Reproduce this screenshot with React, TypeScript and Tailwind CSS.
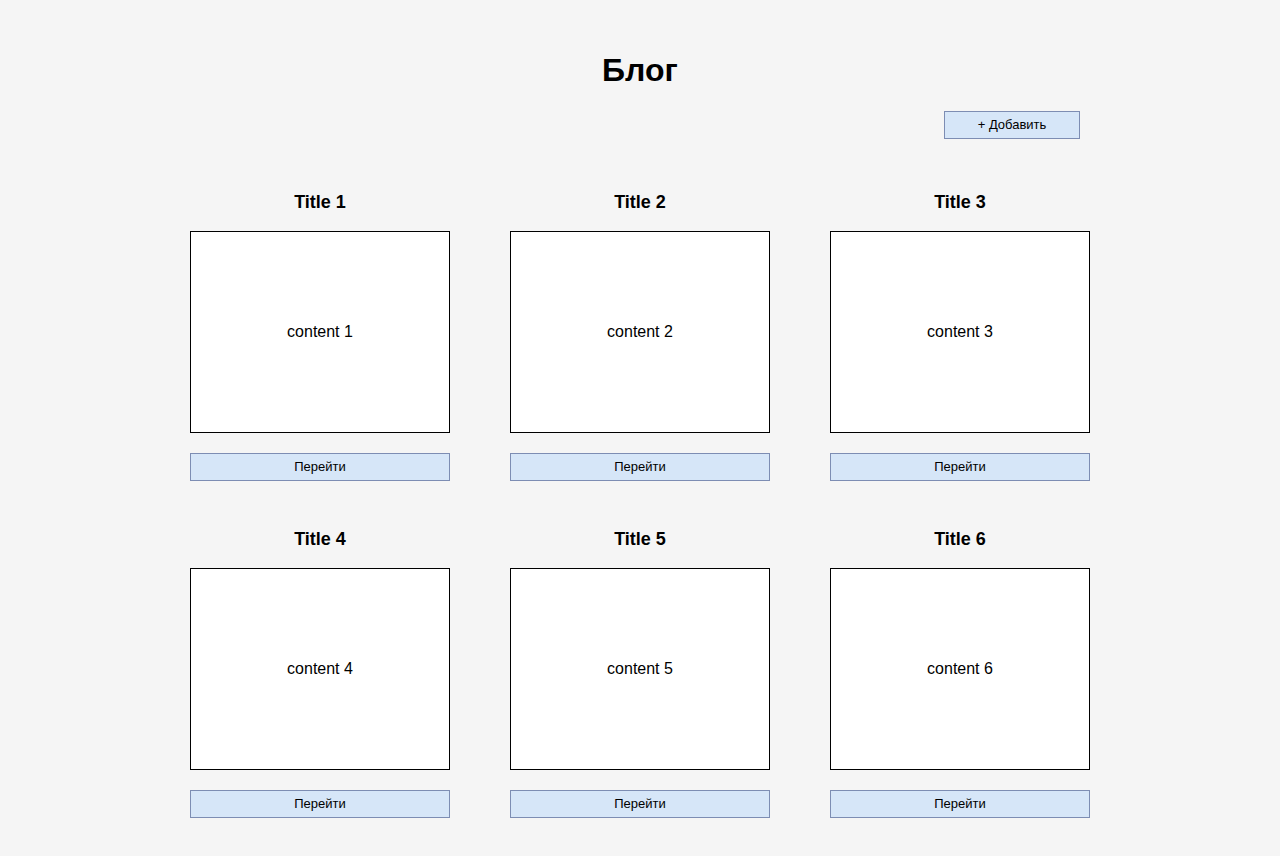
const posts = [1, 2, 3, 4, 5, 6].map((n) => ({
  id: n,
  title: `Title ${n}`,
  content: `content ${n}`,
}))

function PostCard({ title, content }: { title: string; content: string }) {
  return (
    <div className="flex flex-col">
      <h3 className="text-center text-[18px] font-bold leading-[24px] text-black">{title}</h3>
      <div className="mt-[17px] flex h-[202px] items-center justify-center border border-black bg-white text-[16px] text-black">
        {content}
      </div>
      <button className="mt-5 h-7 w-full border border-[#7d8db3] bg-[#d6e6f8] text-[13px] text-black">
        Перейти
      </button>
    </div>
  )
}

export default function App() {
  return (
    <div
      className="min-h-screen bg-[#f5f5f5] pt-[52px] pb-[38px]"
      style={{ fontFamily: '"Liberation Sans", Arial, sans-serif' }}
    >
      <div className="mx-auto w-[900px]">
        <h1 className="text-center text-[32px] font-bold leading-[37px] text-black">Блог</h1>
        <div className="mt-[22px] flex justify-end pr-[10px]">
          <button className="h-7 w-[136px] border border-[#7d8db3] bg-[#d6e6f8] text-[13px] text-black">
            + Добавить
          </button>
        </div>
        <div className="mt-[51px] grid grid-cols-3 gap-x-[60px] gap-y-[46px]">
          {posts.map((p) => (
            <PostCard key={p.id} title={p.title} content={p.content} />
          ))}
        </div>
      </div>
    </div>
  )
}
